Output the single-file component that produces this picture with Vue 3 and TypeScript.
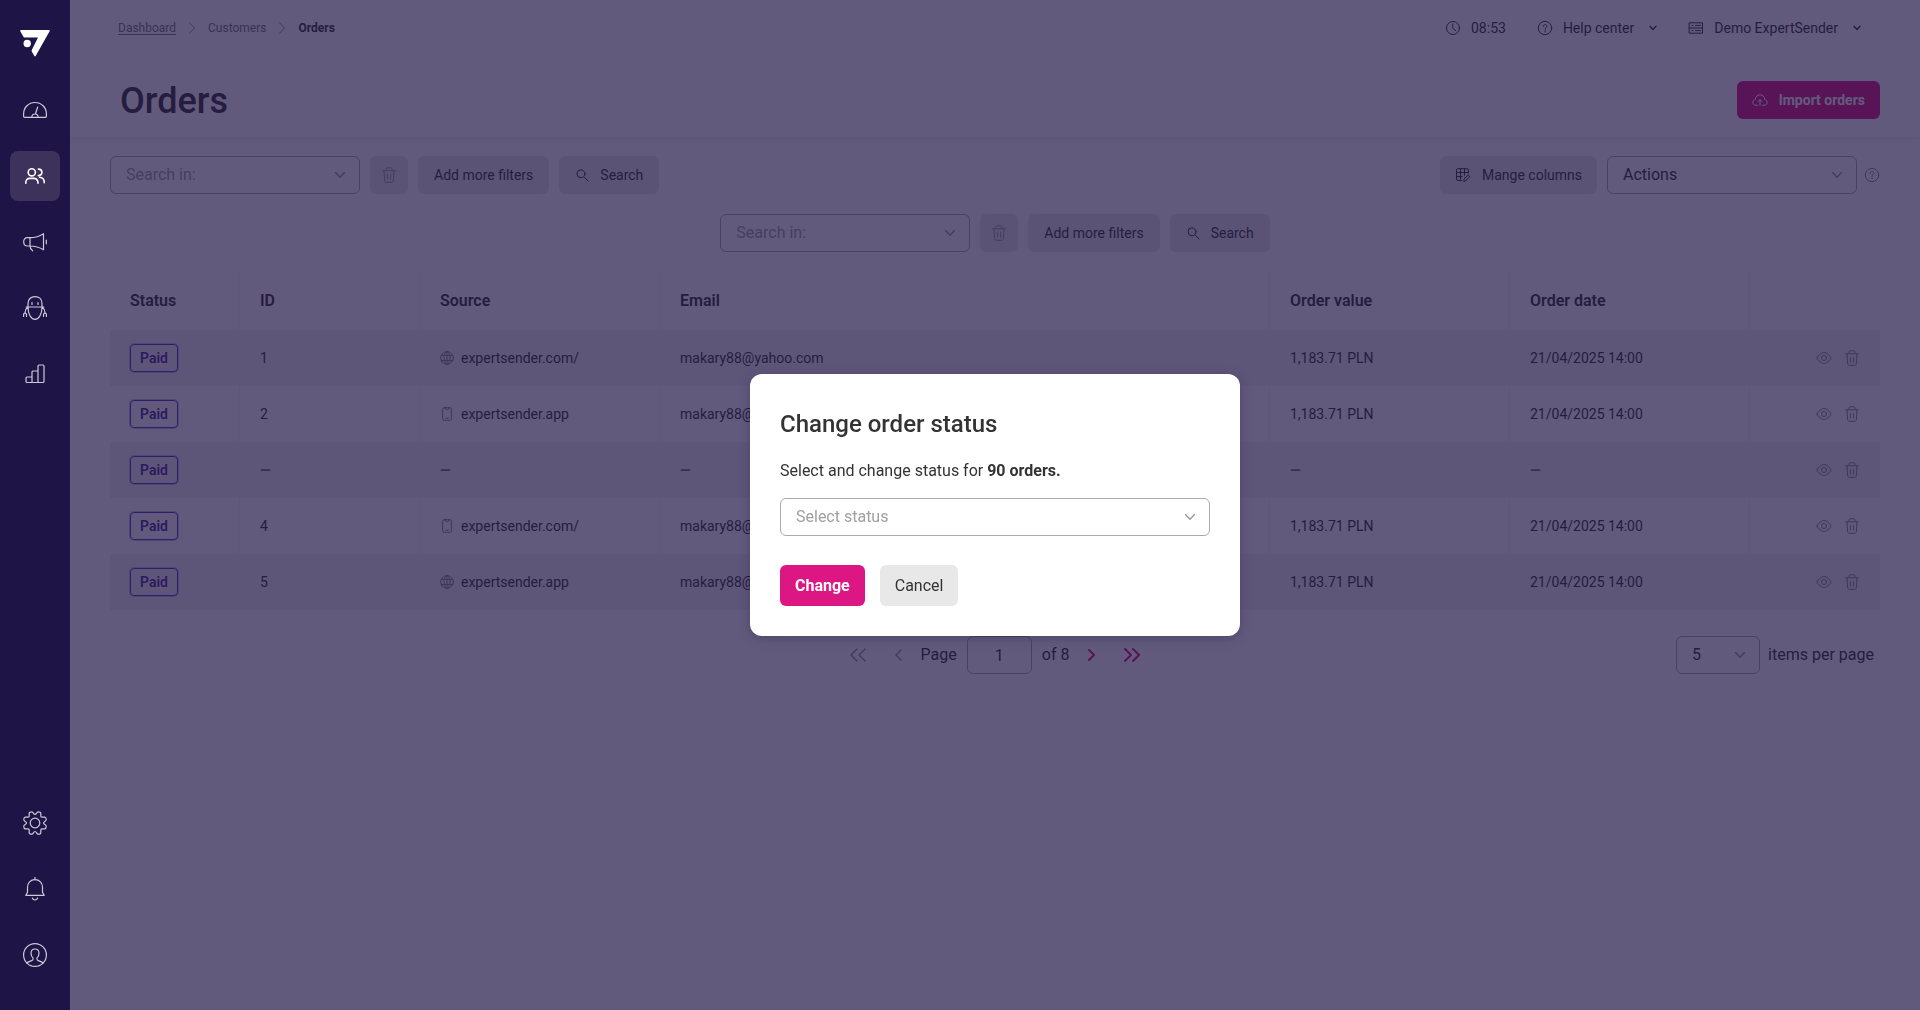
<script setup lang="ts">
import { ref } from 'vue'

interface Order {
  status: string
  id?: string
  source?: string
  kind?: 'globe' | 'phone'
  email?: string
  value?: string
  date?: string
}

const email = 'makary88@yahoo.com'
const value = '1,183.71 PLN'
const date = '21/04/2025 14:00'

const orders: Order[] = [
  { status: 'Paid', id: '1', source: 'expertsender.com/', kind: 'globe', email, value, date },
  { status: 'Paid', id: '2', source: 'expertsender.app', kind: 'phone', email, value, date },
  { status: 'Paid' },
  { status: 'Paid', id: '4', source: 'expertsender.com/', kind: 'phone', email, value, date },
  { status: 'Paid', id: '5', source: 'expertsender.app', kind: 'globe', email, value, date },
]

const filterRows = ['main', 'centered']
const page = ref('1')
const perPage = ref('5')
const newStatus = ref('')
const modalOpen = ref(true)
</script>

<template>
  <div class="shell">
    <svg class="defs" aria-hidden="true">
      <symbol id="i-chevron" viewBox="0 0 12 12"><path d="M1.500 3.500 6 8.200l4.500-4.700" /></symbol>
      <symbol id="i-trash" viewBox="0 0 16 16">
        <path d="M1.500 3.800h13M5 3.600V2.200C5 1.300 5.500.8 6.400.8h3.200c.9 0 1.400.5 1.400 1.400v1.400M3 4l.6 9.600c.1 1.100.7 1.700 1.800 1.700h5.200c1.100 0 1.700-.6 1.800-1.700L13 4M6.400 7.200v5M9.600 7.200v5" />
      </symbol>
      <symbol id="i-search" viewBox="0 0 14 14"><circle cx="6" cy="5.800" r="4" /><path d="m9 8.800 4 4.200" /></symbol>
      <symbol id="i-help" viewBox="0 0 16 16">
        <circle cx="8" cy="8" r="6.700" />
        <path d="M6.100 6.400c.1-1.100.8-1.800 1.900-1.800s1.900.7 1.900 1.700c0 1.400-1.800 1.500-1.800 3M8.100 10.900v1" />
      </symbol>
      <symbol id="i-globe" viewBox="0 0 14 14">
        <circle cx="7" cy="7" r="6.400" />
        <ellipse cx="7" cy="7" rx="3" ry="6.400" />
        <path d="M7 .6v12.800M1.400 4.400h11.200M1.400 9.600h11.200" />
      </symbol>
      <symbol id="i-phone" viewBox="0 0 14 14">
        <rect x="2.600" y=".6" width="8.800" height="12.800" rx="1.800" />
        <path d="M5.200.8v1.400h3.600V.8M5.600 11.200h2.800" />
      </symbol>
      <symbol id="i-eye" viewBox="0 0 16 16">
        <path d="M1 8c0-.8 3.200-5.400 7-5.400S15 7.200 15 8s-3.200 5.400-7 5.400S1 8.800 1 8Z" /><circle cx="8" cy="8" r="2.500" />
      </symbol>
    </svg>

    <aside class="sidebar">
      <a class="logo" href="#" aria-label="Home">
        <svg width="30" height="27" viewBox="0 0 30 27">
          <path fill="currentColor" d="M1 0H29Q30.300 0 29.600 1.200L15.800 25.800Q15 27 14.200 25.800L11.800 21.600Q11.400 20.700 11.800 19.900L18 7.600H5Q4 7.600 3.400 6.700L.3 1.200Q-.2 0 1 0Z" />
          <circle cx="7.200" cy="13.500" r="3.700" fill="currentColor" />
        </svg>
      </a>
      <nav class="nav" aria-label="Main">
        <a class="nav-item" href="#" aria-label="Dashboard">
          <svg class="icon24" viewBox="0 0 24 24">
            <path d="M1.600 19.300H22.400a1 1 0 0 0 1-1V15.800C23.400 9.400 18.300 4.500 12 4.500S.6 9.400.6 15.800v2.500a1 1 0 0 0 1 1ZM8.800 19.200a3.200 3.200 0 0 1 6.400 0M12.400 16l2.300-7" />
          </svg>
        </a>
        <a class="nav-item active" href="#" aria-label="Customers">
          <svg class="icon24 strong" viewBox="0 0 24 24">
            <circle cx="8.800" cy="8.300" r="3.600" />
            <path d="M2.800 19.200c0-3.400 1.400-4.800 4.200-4.800h3.800c2.800 0 4.200 1.400 4.200 4.800M15.400 5.100c2.200.1 3.500 1.300 3.500 3.200s-1.300 3.200-3.500 3.300M16.600 13.200c3 .2 4.700 2 4.700 5.600" />
          </svg>
        </a>
        <a class="nav-item" href="#" aria-label="Campaigns">
          <svg class="icon24" viewBox="0 0 24 24">
            <path d="M7.200 7.700H4.200C2 7.700.7 9.300.7 11.800S2 16 4.200 16h3C12 16 16.500 17.300 20.500 19.800V3.700C16.500 6.300 12 7.700 7.200 7.700ZM7 7.700V16c0 2 .8 3.500 2.600 4.800M23.300 10v3.800" />
          </svg>
        </a>
        <a class="nav-item" href="#" aria-label="Automation">
          <svg class="icon24" viewBox="0 0 24 24">
            <path d="M5 11V7.600C5 3.400 7.800.6 12 .6s7 2.800 7 7V11c0 7-3 12.400-7 12.400S5 18 5 11ZM3.200 11h17.600M4.600 11.200C2.800 12.500 2 14.500 1.900 17M19.400 11.200c1.800 1.300 2.600 3.300 2.700 5.800M.6 20.500v-1.700c0-1.100.5-1.700 1.400-1.700s1.500.6 1.500 1.700v1.700M20.500 20.500v-1.700c0-1.100.5-1.700 1.400-1.700s1.500.6 1.500 1.700v1.700M9 6.600v1.800M15 6.600v1.800" />
          </svg>
        </a>
        <a class="nav-item" href="#" aria-label="Reports">
          <svg class="icon24" viewBox="0 0 24 24">
            <path d="M4 20.500a1 1 0 0 1-1-1V16a1 1 0 0 1 1-1h5V10a1 1 0 0 1 1-1h5V4a1 1 0 0 1 1-1h4a1 1 0 0 1 1 1v15.500a1 1 0 0 1-1 1ZM9 15v5.500M15 9v11.500" />
          </svg>
        </a>
      </nav>
      <nav class="nav nav-bottom" aria-label="Account">
        <a class="nav-item" href="#" aria-label="Settings">
          <svg class="icon24" viewBox="0 0 24 24">
            <path d="M12 3.500C13.500 3.500 13.700.8 15 .8Q17.600.8 17.800 2.200V5Q17.800 6.200 19 6.200H21.800Q23.200 6.400 23.200 8.800C23.200 10.300 20.500 10.500 20.500 12S23.200 13.700 23.200 15.200Q23.200 17.600 21.800 17.800H19Q17.800 17.800 17.800 19V21.800Q17.600 23.200 15 23.200C13.700 23.200 13.500 20.500 12 20.500S10.300 23.200 9 23.200Q6.400 23.200 6.200 21.800V19Q6.200 17.800 5 17.800H2.200Q.8 17.600.8 15.200C.8 13.700 3.500 13.500 3.500 12S.8 10.300.8 8.800Q.8 6.400 2.200 6.200H5Q6.200 6.200 6.200 5V2.200Q6.400.8 9 .8C10.300.8 10.500 3.500 12 3.500Z" />
            <circle cx="12" cy="12" r="4.800" />
          </svg>
        </a>
        <a class="nav-item" href="#" aria-label="Notifications">
          <svg class="icon24" viewBox="0 0 24 24">
            <path d="M12 .5v2M2.800 18.300h18.400l-1.700-3V10.500C19.500 5.800 16.500 2.700 12 2.700S4.500 5.800 4.500 10.500v4.800ZM9.400 21c.4 1.300 1.300 2 2.600 2s2.200-.7 2.600-2" />
          </svg>
        </a>
        <a class="nav-item" href="#" aria-label="Profile">
          <svg class="icon24" viewBox="0 0 24 24">
            <circle cx="12" cy="12" r="11.400" />
            <path d="M3.900 20c1.300-1.500 3.300-1.900 4.900-2.400 1.200-.4 1.500-1 1.300-2.500C8.700 13.700 8 12 8 10.300 8 7.800 9.500 6 12 6s4 1.800 4 4.300c0 1.700-.7 3.400-2.100 4.800-.2 1.500.1 2.100 1.300 2.500 1.600.5 3.600.9 4.900 2.400" />
          </svg>
        </a>
      </nav>
    </aside>

    <main class="main">
      <header class="header">
        <div class="topbar">
          <nav class="crumbs" aria-label="Breadcrumb">
            <a href="#">Dashboard</a>
            <svg class="sep" viewBox="0 0 8 12"><path d="m1.500.8 5 5.200-5 5.200" /></svg>
            <span>Customers</span>
            <svg class="sep" viewBox="0 0 8 12"><path d="m1.500.8 5 5.200-5 5.200" /></svg>
            <strong>Orders</strong>
          </nav>
          <div class="tools">
            <span class="tool">
              <svg class="icon16" viewBox="0 0 16 16"><circle cx="8" cy="8" r="6.500" /><path d="M7.700 4v4.300l3 2.200" /></svg>
              <time>08:53</time>
            </span>
            <button class="tool" type="button">
              <svg class="icon16"><use href="#i-help" /></svg>
              <span>Help center</span>
              <svg class="mini"><use href="#i-chevron" /></svg>
            </button>
            <button class="tool" type="button">
              <svg class="icon16" viewBox="0 0 16 16">
                <path d="M1.500 2.800h13v10.400h-13ZM1.500 8h13M7.500 5.400h5M7.500 10.600h5M4 5.400h1M4 10.600h1" />
              </svg>
              <span>Demo ExpertSender</span>
              <svg class="mini"><use href="#i-chevron" /></svg>
            </button>
          </div>
        </div>
        <div class="title-row">
          <h1>Orders</h1>
          <button class="btn primary" type="button">
            <svg class="icon16" viewBox="0 0 16 16">
              <path d="M5.500 13.200H4C2.200 13.200.8 12 .8 10.300.8 8.800 1.800 7.700 3.300 7.400 3.500 4.700 5.400 2.800 8 2.800s4.500 1.900 4.700 4.600c1.500.3 2.500 1.400 2.500 2.900 0 1.700-1.400 2.900-3.200 2.900h-1.500M8 13.200V7.800M6 9.600l2-2 2 2" />
            </svg>
            <span>Import orders</span>
          </button>
        </div>
      </header>

      <section class="content">
        <div v-for="row in filterRows" :key="row" class="filters" :class="row">
          <div class="group">
            <div class="select wide">
              <select class="placeholder" aria-label="Search in">
                <option>Search in:</option>
              </select>
              <svg class="chev"><use href="#i-chevron" /></svg>
            </div>
            <button class="btn square" type="button" aria-label="Remove filter">
              <svg class="icon16"><use href="#i-trash" /></svg>
            </button>
            <button class="btn roomy" type="button">Add more filters</button>
            <button class="btn roomy" type="button">
              <svg class="icon14"><use href="#i-search" /></svg>
              <span>Search</span>
            </button>
          </div>
          <div v-if="row === 'main'" class="group">
            <button class="btn" type="button">
              <svg class="icon16" viewBox="0 0 16 16">
                <path d="M6.500 13.500H3a1.500 1.500 0 0 1-1.500-1.500V3.200A1.500 1.500 0 0 1 3 1.700h9a1.500 1.500 0 0 1 1.500 1.500V6M1.500 5.500h12M1.500 9.500H7M5.500 1.700v11.800M9.500 1.700v6.500M8.800 14.200l.3-2.200 4-4 1.700 1.700-4 4Z" />
              </svg>
              <span>Mange columns</span>
            </button>
            <div class="select wide">
              <select aria-label="Actions">
                <option>Actions</option>
              </select>
              <svg class="chev"><use href="#i-chevron" /></svg>
            </div>
            <svg class="icon16 hint"><use href="#i-help" /></svg>
          </div>
        </div>

        <table class="orders">
          <colgroup>
            <col class="c-status" /><col class="c-id" /><col class="c-mid" /><col />
            <col class="c-mid" /><col class="c-mid" /><col class="c-status" />
          </colgroup>
          <thead>
            <tr>
              <th>Status</th>
              <th>ID</th>
              <th>Source</th>
              <th>Email</th>
              <th>Order value</th>
              <th>Order date</th>
              <th aria-label="Row actions"></th>
            </tr>
          </thead>
          <tbody>
            <tr v-for="(o, i) in orders" :key="i">
              <td><span class="badge">{{ o.status }}</span></td>
              <td><template v-if="o.id">{{ o.id }}</template><span v-else class="none">—</span></td>
              <td>
                <span v-if="o.source" class="source">
                  <svg class="icon14"><use :href="'#i-' + o.kind" /></svg>
                  <span>{{ o.source }}</span>
                </span>
                <span v-else class="none">—</span>
              </td>
              <td><template v-if="o.email">{{ o.email }}</template><span v-else class="none">—</span></td>
              <td><template v-if="o.value">{{ o.value }}</template><span v-else class="none">—</span></td>
              <td><template v-if="o.date">{{ o.date }}</template><span v-else class="none">—</span></td>
              <td>
                <span class="row-actions">
                  <button type="button" aria-label="View order"><svg class="icon16"><use href="#i-eye" /></svg></button>
                  <button type="button" aria-label="Delete order"><svg class="icon16"><use href="#i-trash" /></svg></button>
                </span>
              </td>
            </tr>
          </tbody>
        </table>

        <footer class="pager">
          <div class="pages">
            <button class="arrow" type="button" aria-label="First page" disabled>
              <svg width="16" height="16" viewBox="0 0 16 16"><path d="M7 2 1 8l6 6M15 2 9 8l6 6" /></svg>
            </button>
            <button class="arrow" type="button" aria-label="Previous page" disabled>
              <svg width="8" height="16" viewBox="0 0 8 16"><path d="M7 3 2 8l5 5" /></svg>
            </button>
            <label for="page">Page</label>
            <input id="page" v-model="page" class="page-input" type="text" />
            <span>of 8</span>
            <button class="arrow" type="button" aria-label="Next page">
              <svg width="8" height="16" viewBox="0 0 8 16"><path d="m1 3 5 5-5 5" /></svg>
            </button>
            <button class="arrow" type="button" aria-label="Last page">
              <svg width="16" height="16" viewBox="0 0 16 16"><path d="m1 2 6 6-6 6M9 2l6 6-6 6" /></svg>
            </button>
          </div>
          <div class="per-page">
            <div class="select">
              <select id="per-page" v-model="perPage">
                <option>5</option>
                <option>10</option>
              </select>
              <svg class="chev"><use href="#i-chevron" /></svg>
            </div>
            <label for="per-page">items per page</label>
          </div>
        </footer>
      </section>
    </main>

    <div v-if="modalOpen" class="overlay">
      <div class="modal" role="dialog" aria-modal="true" aria-labelledby="modal-title">
        <h2 id="modal-title">Change order status</h2>
        <label for="status">Select and change status for <b>90 orders.</b></label>
        <div class="select">
          <select id="status" v-model="newStatus" class="placeholder">
            <option value="">Select status</option>
            <option value="paid">Paid</option>
          </select>
          <svg class="chev"><use href="#i-chevron" /></svg>
        </div>
        <div class="modal-actions">
          <button class="btn large primary" type="button">Change</button>
          <button class="btn large" type="button" @click="modalOpen = false">Cancel</button>
        </div>
      </div>
    </div>
  </div>
</template>

<style>
body {
  margin: 0;
  background: #fff;
}
</style>

<style scoped>
* {
  box-sizing: border-box;
}
.shell {
  display: flex;
  min-height: 100vh;
  font: 14px/20px Roboto, "Liberation Sans", sans-serif;
  color: #333;
}
.defs {
  position: absolute;
  width: 0;
  height: 0;
}
button,
input,
select {
  font: inherit;
  color: inherit;
}
button {
  border: 0;
  padding: 0;
  background: none;
  cursor: pointer;
}
svg {
  flex: none;
  fill: none;
  stroke: currentColor;
  stroke-linecap: round;
  stroke-linejoin: round;
}
.icon14 {
  width: 14px;
  height: 14px;
}
.icon16 {
  width: 16px;
  height: 16px;
}
.icon24 {
  width: 24px;
  height: 24px;
  stroke-width: 1.2;
}
.strong {
  stroke-width: 1.6;
}

.sidebar {
  position: relative;
  z-index: 2;
  flex: none;
  display: flex;
  flex-direction: column;
  align-items: center;
  width: 70px;
  padding: 30px 0;
  background: #1e1446;
  color: #cdcad8;
}
.logo {
  height: 27px;
  margin-bottom: 28px;
  color: #fff;
}
.logo svg {
  display: block;
  stroke: none;
}
.nav {
  display: flex;
  flex-direction: column;
  gap: 16px;
}
.nav-bottom {
  margin-top: auto;
}
.nav-item {
  display: flex;
  align-items: center;
  justify-content: center;
  width: 50px;
  height: 50px;
  border-radius: 8px;
  color: inherit;
}
.nav-item.active {
  background: #3c325c;
  color: #fff;
}

.main {
  flex: 1;
  min-width: 0;
}
.header {
  padding: 0 40px 18px 48px;
  box-shadow: 0 2px 8px rgba(0, 0, 0, 0.08);
}
.topbar {
  display: flex;
  align-items: center;
  justify-content: space-between;
  height: 56px;
  padding-right: 19px;
}
.crumbs {
  display: flex;
  align-items: center;
  gap: 12px;
  font-size: 12px;
  color: #777;
}
.crumbs a {
  color: inherit;
  text-underline-offset: 2px;
}
.crumbs strong {
  color: #333;
}
.sep {
  width: 8px;
  height: 12px;
  stroke-width: 0.8;
}
.tools {
  display: flex;
  align-items: center;
  gap: 31px;
}
.tool {
  display: flex;
  align-items: center;
  gap: 10px;
}
.mini {
  width: 8px;
  height: 8px;
  margin-left: 5px;
  stroke-width: 2;
}
.title-row {
  display: flex;
  align-items: center;
  justify-content: space-between;
  margin-top: 25px;
  padding-left: 2px;
}
h1,
h2 {
  margin: 0;
  font-weight: 500;
}
h1 {
  font-size: 36px;
  line-height: 36px;
  padding-top: 2px;
}

.btn {
  display: flex;
  align-items: center;
  justify-content: center;
  gap: 11px;
  height: 38px;
  padding: 0 15px;
  border-radius: 6px;
  background: #e8e8e8;
}
.btn.roomy {
  padding: 0 16px;
}
.btn.square {
  width: 38px;
  padding: 0;
  color: #999;
}
.btn.primary {
  background: #dc1783;
  color: #fff;
  font-weight: 700;
}
.btn.large {
  height: 41px;
  font-size: 16px;
}

.content {
  padding: 19px 40px;
}
.filters {
  display: flex;
  justify-content: space-between;
  margin-bottom: 20px;
}
.filters.centered {
  justify-content: center;
}
.group {
  display: flex;
  align-items: center;
  gap: 10px;
}
.hint {
  color: #888;
  margin-left: -3px;
}

.select {
  display: grid;
  align-items: center;
  font-size: 16px;
}
.select.wide {
  width: 250px;
}
.select select,
.chev {
  grid-area: 1 / 1;
}
.select select,
.page-input {
  height: 38px;
  border: 1px solid #aaa;
  border-radius: 6px;
  background: #fff;
}
.select select {
  appearance: none;
  width: 100%;
  padding: 0 32px 0 15px;
}
.select select.placeholder {
  color: #a0a0a0;
}
.chev {
  justify-self: end;
  width: 12px;
  height: 12px;
  margin-right: 14px;
  color: #999;
  stroke-width: 1.3;
  pointer-events: none;
}

.orders {
  width: 100%;
  table-layout: fixed;
  border-collapse: separate;
  border-spacing: 0;
}
.c-status {
  width: 130px;
}
.c-id {
  width: 180px;
}
.c-mid {
  width: 240px;
}
th,
td {
  height: 56px;
  padding: 0 20px;
  text-align: left;
}
th {
  height: 58px;
  font-size: 16px;
  font-weight: 600;
}
th:not(:last-child),
tr:nth-child(even) td:not(:last-child) {
  border-right: 1px solid #f5f5f5;
}
tbody tr:nth-child(odd) td {
  background: #f2f2f2;
}
.badge {
  display: inline-flex;
  align-items: center;
  height: 28px;
  padding: 0 9px;
  border: 1px solid #5e2fc8;
  border-radius: 4px;
  box-shadow: 0 0 0 1px rgba(94, 47, 200, 0.3);
  color: #4c2b9c;
  font-weight: 600;
}
.source {
  display: flex;
  align-items: center;
  gap: 7px;
}
.source svg {
  color: #888;
}
.none {
  color: #777;
  font-weight: 700;
}
.row-actions {
  display: flex;
  justify-content: flex-end;
  gap: 12px;
  color: #888;
}
.row-actions svg {
  display: block;
}

.pager {
  display: grid;
  grid-template-columns: 1fr auto 1fr;
  align-items: center;
  margin-top: 26px;
  font-size: 16px;
}
.pages {
  grid-column: 2;
  display: flex;
  align-items: center;
  gap: 10px;
}
.page-input {
  width: 65px;
  text-align: center;
}
.arrow {
  display: flex;
  padding: 0 9px;
  color: #dc1783;
  stroke-width: 2;
}
.arrow:disabled {
  color: #999;
  stroke-width: 1.5;
}
.per-page {
  display: flex;
  align-items: center;
  justify-content: flex-end;
  gap: 8px;
  padding-right: 6px;
}
.per-page .select {
  width: 84px;
}

.overlay {
  position: fixed;
  inset: 0 0 0 70px;
  z-index: 1;
  display: flex;
  align-items: center;
  justify-content: center;
  background: rgba(32, 20, 69, 0.7);
}
.modal {
  width: 490px;
  padding: 34px 30px 30px;
  border-radius: 12px;
  background: #fff;
  box-shadow: 0 2px 12px rgba(32, 20, 69, 0.3);
  font-size: 16px;
}
h2 {
  font-size: 24px;
  line-height: 32px;
}
.modal label {
  display: block;
  margin: 21px 0 17px;
}
.modal-actions {
  display: flex;
  gap: 15px;
  margin-top: 29px;
}
</style>
